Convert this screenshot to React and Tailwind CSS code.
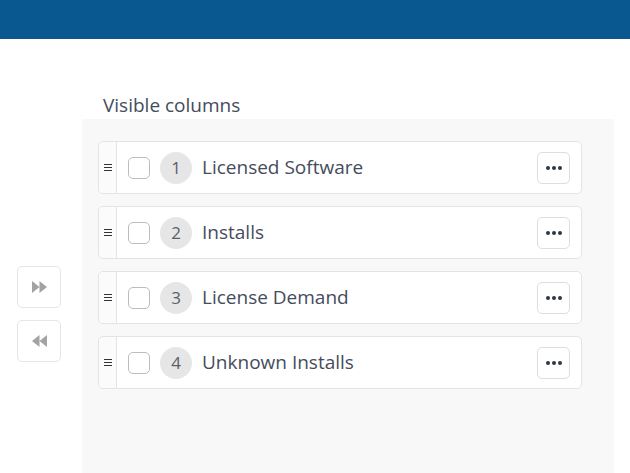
import React from 'react';

const columns = [
  { id: 1, name: 'Licensed Software' },
  { id: 2, name: 'Installs' },
  { id: 3, name: 'License Demand' },
  { id: 4, name: 'Unknown Installs' },
];

function FastIcon({ flip }) {
  return (
    <svg width="15" height="12" viewBox="0 0 15 12" style={{ transform: flip ? 'scaleX(-1)' : undefined }}>
      <path d="M0 0 L7.5 6 L0 12 Z M7.5 0 L15 6 L7.5 12 Z" fill="#a3a3a3" />
    </svg>
  );
}

function ColumnRow({ col }) {
  return (
    <div className="flex items-center h-[53px] bg-white border border-[#e4e4e4] rounded-[5px]">
      <div className="w-[18px] h-full flex items-center justify-center border-r border-[#e4e4e4] bg-[#fbfbfb] rounded-l-[5px]">
        <svg width="8" height="7" viewBox="0 0 8 7">
          <path d="M0 0.5 H8 M0 3.5 H8 M0 6.5 H8" stroke="#333" strokeWidth="1" />
        </svg>
      </div>
      <div className="ml-[11px] w-[22px] h-[22px] rounded-[5px] border border-[#bcbcbc] bg-white" />
      <div className="ml-[10px] w-[32px] h-[32px] rounded-full bg-[#e6e6e6] flex items-center justify-center text-[17px] text-[#5a5f69]">
        {col.id}
      </div>
      <div className="ml-[10px] flex-1 text-[19px] text-[#454c5c]">{col.name}</div>
      <button className="mr-[11px] w-[33px] h-[32px] rounded-[5px] border border-[#dedede] bg-white flex items-center justify-center">
        <svg width="16" height="4" viewBox="0 0 16 4">
          <circle cx="2" cy="2" r="2" fill="#2f3645" />
          <circle cx="8" cy="2" r="2" fill="#2f3645" />
          <circle cx="14" cy="2" r="2" fill="#2f3645" />
        </svg>
      </button>
    </div>
  );
}

export default function App() {
  return (
    <div className="w-[630px] h-[473px] overflow-hidden bg-white" style={{ fontFamily: "'Open Sans', 'Liberation Sans', sans-serif" }}>
      <div className="h-[39px] bg-[#0a5890]" />
      <div className="flex">
        <div className="w-[82px] pl-[17px] pt-[227px] flex flex-col gap-[12px]">
          <button className="w-[44px] h-[42px] rounded-[5px] border border-[#e6e6e6] bg-white flex items-center justify-center">
            <FastIcon />
          </button>
          <button className="w-[44px] h-[42px] rounded-[5px] border border-[#e6e6e6] bg-white flex items-center justify-center">
            <FastIcon flip />
          </button>
        </div>
        <div className="w-[532px]">
          <div className="pt-[54px] pl-[21px] h-[80px] text-[19px] leading-[24px] text-[#454c5c]">Visible columns</div>
          <div className="bg-[#f8f8f8] h-[400px] pt-[22px] pl-[16px] pr-[32px] flex flex-col gap-[12px]">
            {columns.map((c) => (
              <ColumnRow key={c.id} col={c} />
            ))}
          </div>
        </div>
      </div>
    </div>
  );
}
